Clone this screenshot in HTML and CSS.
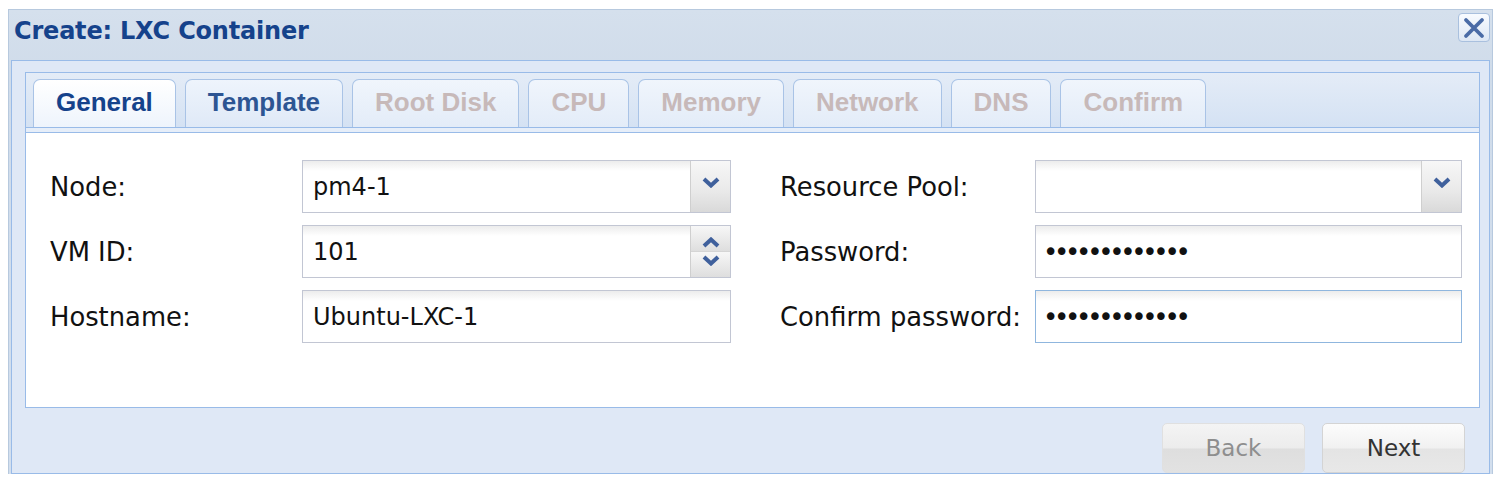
FILE: index.html
```html
<!DOCTYPE html>
<html>
<head>
<meta charset="utf-8">
<link rel="stylesheet" href="styles.css">
</head>
<body>
<div class="window">
  <div class="header">
    <div class="title">Create: LXC Container</div>
    <div class="close">
      <svg width="24" height="22" viewBox="0 0 24 22"><path d="M4 3 L20 19 M20 3 L4 19" stroke="#4a6ba6" stroke-width="3.8" fill="none" stroke-linecap="round"/></svg>
    </div>
  </div>
  <div class="body">
    <div class="tabbar">
      <div class="tabs">
        <div class="tab active">General</div>
        <div class="tab">Template</div>
        <div class="tab disabled">Root Disk</div>
        <div class="tab disabled">CPU</div>
        <div class="tab disabled">Memory</div>
        <div class="tab disabled">Network</div>
        <div class="tab disabled">DNS</div>
        <div class="tab disabled">Confirm</div>
      </div>
      <div class="strip"></div>
    </div>
    <div class="tabbody">
      <div class="form">
        <div class="col left">
          <div class="label">Node:</div>
          <div class="field"><span class="value">pm4-1</span>
            <div class="trigger"><svg width="18" height="11" viewBox="0 0 18 11"><path d="M2 2 L9 8.5 L16 2" stroke="#3f609c" stroke-width="4" fill="none"/></svg></div>
          </div>
          <div class="label">VM ID:</div>
          <div class="field"><span class="value">101</span>
            <div class="spinner">
              <div class="spin up"><svg width="18" height="11" viewBox="0 0 18 11"><path d="M2 9 L9 2.5 L16 9" stroke="#3f609c" stroke-width="4" fill="none"/></svg></div>
              <div class="spin down"><svg width="18" height="11" viewBox="0 0 18 11"><path d="M2 2 L9 8.5 L16 2" stroke="#3f609c" stroke-width="4" fill="none"/></svg></div>
            </div>
          </div>
          <div class="label">Hostname:</div>
          <div class="field"><span class="value">Ubuntu-LXC-1</span></div>
        </div>
        <div class="col right">
          <div class="label">Resource Pool:</div>
          <div class="field"><span class="value"></span>
            <div class="trigger"><svg width="18" height="11" viewBox="0 0 18 11"><path d="M2 2 L9 8.5 L16 2" stroke="#3f609c" stroke-width="4" fill="none"/></svg></div>
          </div>
          <div class="label">Password:</div>
          <div class="field"><span class="value dots">•••••••••••••</span></div>
          <div class="label">Confirm password:</div>
          <div class="field focus"><span class="value dots">•••••••••••••</span></div>
        </div>
      </div>
    </div>
    <div class="footer">
      <div class="btn disabled">Back</div>
      <div class="btn">Next</div>
    </div>
  </div>
</div>
</body>
</html>
```

FILE: styles.css
```css
html, body {
  margin: 0;
  background: #ffffff;
  font-family: "DejaVu Sans", Verdana, sans-serif;
}

.window {
  margin: 9px 0 0 8px;
  width: 1485px;
  height: 465px;
  box-sizing: border-box;
  background: linear-gradient(#d5e0ed, #d0dcea 60px, #d3dfee);
  border: 1px solid #b7c9de;
  border-bottom: none;
  padding: 0 2px;
  display: flex;
  flex-direction: column;
}

.header {
  height: 50px;
  box-sizing: border-box;
  display: flex;
  align-items: center;
  justify-content: space-between;
  padding: 0 0 8px 3px;
}

.title {
  font-weight: bold;
  font-size: 24px;
  color: #15428b;
  letter-spacing: -0.2px;
}

.close {
  align-self: flex-start;
  margin-top: 3px;
  width: 32px;
  height: 29px;
  box-sizing: border-box;
  border: 1px solid #a9c0de;
  border-radius: 4px;
  background: linear-gradient(#f8fbff, #dde7f4);
  display: flex;
  align-items: center;
  justify-content: center;
}

.body {
  flex: 1;
  border: 1px solid #99bbe8;
  background: #dfe8f6;
  padding: 11px 9px 0 13px;
  display: flex;
  flex-direction: column;
}

.tabbar {
  border: 1px solid #99bbe8;
  border-bottom: none;
  background: linear-gradient(#e4ecf7, #d3e1f3);
}

.tabs {
  display: flex;
  gap: 9px;
  padding: 6px 0 0 7px;
  height: 48px;
}

.tab {
  height: 48px;
  box-sizing: border-box;
  padding: 0 22px 3px;
  border: 1px solid #a9c3e6;
  border-bottom: none;
  border-radius: 7px 7px 0 0;
  background: linear-gradient(#eef4fc, #dfe9f7);
  font-family: "Liberation Sans", Arial, sans-serif;
  font-weight: bold;
  font-size: 26px;
  color: #2d5593;
  display: flex;
  align-items: center;
}

.tab.active {
  background: linear-gradient(#ffffff, #eef4fc);
  color: #15428b;
}

.tab.disabled {
  color: #c7b9b9;
  background: linear-gradient(#f0f5fc, #e3ecf8);
}

.strip {
  height: 4px;
  border-top: 1px solid #99bbe8;
  background: #e6eef9;
}

.tabbody {
  height: 276px;
  box-sizing: border-box;
  border: 1px solid #99bbe8;
  background: #ffffff;
  padding: 27px 0 0 24px;
}

.form {
  display: flex;
  gap: 49px;
}

.col {
  display: grid;
  row-gap: 12px;
  grid-auto-rows: 53px;
}

.col.left {
  grid-template-columns: 252px 429px;
}

.col.right {
  grid-template-columns: 255px 427px;
}

.label {
  display: flex;
  align-items: center;
  font-size: 25.8px;
  color: #111;
}

.field {
  box-sizing: border-box;
  border: 1px solid #c2c6d3;
  background: linear-gradient(#ececec, #ffffff 10px);
  display: flex;
  align-items: center;
}

.field.focus {
  border-color: #8fb6de;
}

.value {
  flex: 1;
  padding-left: 10px;
  font-size: 24px;
  color: #111;
}

.dots {
  font-size: 26px;
  letter-spacing: -4.3px;
  padding-left: 7px;
}

.trigger {
  width: 40px;
  align-self: stretch;
  box-sizing: border-box;
  border-left: 1px solid #cfcfcf;
  background: linear-gradient(#f7f7f7, #e9e9e9 60%, #d9d9d9);
  display: flex;
  align-items: flex-start;
  justify-content: center;
  padding-top: 16px;
}

.spinner {
  width: 40px;
  align-self: stretch;
  box-sizing: border-box;
  border-left: 1px solid #cfcfcf;
  display: flex;
  flex-direction: column;
}

.spin {
  flex: 1;
  display: flex;
  justify-content: center;
  background: linear-gradient(#f7f7f7, #dedede);
}

.spin.up {
  align-items: flex-end;
  padding-bottom: 3px;
}

.spin.down {
  align-items: flex-start;
  padding-top: 3px;
  border-top: 1px solid #d5d5d5;
}

.footer {
  display: flex;
  justify-content: flex-end;
  gap: 17px;
  padding: 15px 15px 0 0;
}

.btn {
  width: 143px;
  height: 50px;
  box-sizing: border-box;
  border: 1px solid #d4d4d4;
  border-radius: 5px;
  background: linear-gradient(#fcfcfc, #f1f1f1 50%, #e4e4e4 52%, #e8e8e8);
  display: flex;
  align-items: center;
  justify-content: center;
  font-size: 23px;
  color: #333;
}

.btn.disabled {
  color: #8e8e8e;
  background: linear-gradient(#f4f4f4, #ececec 50%, #dedede 52%, #e2e2e2);
  border-color: #e0e0e0;
}
```
